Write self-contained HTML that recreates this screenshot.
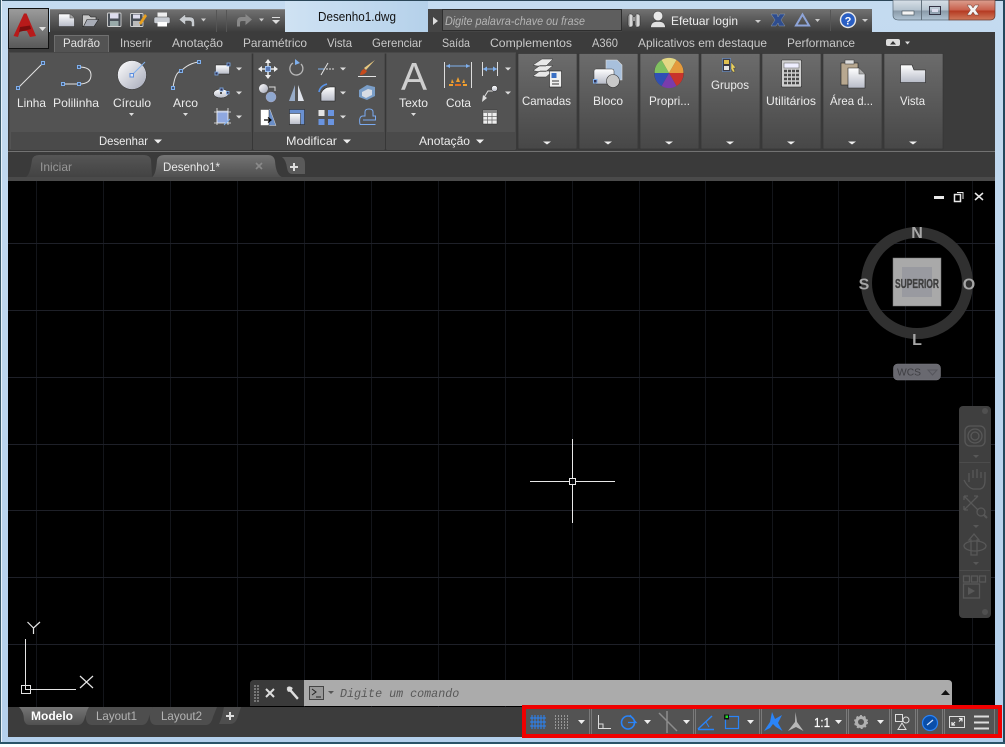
<!DOCTYPE html>
<html><head><meta charset="utf-8"><title>Desenho1.dwg</title>
<style>
html,body{margin:0;padding:0;background:#fff;width:1005px;height:747px;overflow:hidden}
svg{display:block;position:absolute;left:0;top:0}
text{font-family:"Liberation Sans",sans-serif;font-size:12px}
.t{fill:#c9c9c9}.l{fill:#ececec}
</style></head><body>
<svg width="1005" height="747" viewBox="0 0 1005 747" xmlns="http://www.w3.org/2000/svg">
<defs>
<linearGradient id="fr" x1="0" y1="0" x2="0" y2="1"><stop offset="0" stop-color="#c4dbf0"/><stop offset="1" stop-color="#b4d0ec"/></linearGradient>
<linearGradient id="tt" x1="0" y1="0" x2="1" y2="0"><stop offset="0" stop-color="#cfe2f3"/><stop offset="1" stop-color="#b5d1ea"/></linearGradient>
<linearGradient id="qa" x1="0" y1="0" x2="0" y2="1"><stop offset="0" stop-color="#727272"/><stop offset="1" stop-color="#3c3c3c"/></linearGradient>
<linearGradient id="lg" x1="0" y1="0" x2="0" y2="1"><stop offset="0" stop-color="#9c9c9c"/><stop offset="1" stop-color="#585858"/></linearGradient>
<linearGradient id="cp" x1="0" y1="0" x2="0" y2="1"><stop offset="0" stop-color="#6c6c6c"/><stop offset="1" stop-color="#474747"/></linearGradient>
<linearGradient id="dt" x1="0" y1="0" x2="0" y2="1"><stop offset="0" stop-color="#747474"/><stop offset="1" stop-color="#505050"/></linearGradient>
<linearGradient id="it" x1="0" y1="0" x2="0" y2="1"><stop offset="0" stop-color="#555"/><stop offset="1" stop-color="#434343"/></linearGradient>
<linearGradient id="wb" x1="0" y1="0" x2="0" y2="1"><stop offset="0" stop-color="#d8e0e8"/><stop offset=".5" stop-color="#b4c2ce"/><stop offset=".55" stop-color="#8a9aa8"/><stop offset="1" stop-color="#b0c4d4"/></linearGradient>
<linearGradient id="wc" x1="0" y1="0" x2="0" y2="1"><stop offset="0" stop-color="#dca090"/><stop offset=".5" stop-color="#c8604c"/><stop offset=".55" stop-color="#b53a22"/><stop offset="1" stop-color="#cf7a5c"/></linearGradient>
<linearGradient id="ci" x1="0" y1="0" x2="1" y2="1"><stop offset="0" stop-color="#fff"/><stop offset="1" stop-color="#a4a8b8"/></linearGradient>
<linearGradient id="ic" x1="0" y1="0" x2="0" y2="1"><stop offset="0" stop-color="#fff"/><stop offset="1" stop-color="#b8bcc8"/></linearGradient>
</defs>

<!-- frame -->
<rect width="1005" height="744" fill="url(#fr)"/>
<rect x="285" y="1" width="143" height="31" fill="url(#tt)"/>
<rect y="0" width="1005" height="1" fill="#2b4658"/>
<rect x="1" y="0" width="1" height="744" fill="#e8f1f9"/>
<rect x="0" y="0" width="1" height="744" fill="#3a5a6a"/>
<rect x="1003" y="0" width="2" height="744" fill="#24475c"/>
<rect y="742" width="1005" height="2" fill="#2a5468"/>

<!-- tab bar + ribbon base -->
<rect x="8" y="32" width="987" height="120" fill="#3c3c3c"/>
<rect x="8" y="151" width="987" height="1" fill="#727272"/>
<rect x="8" y="152" width="987" height="29" fill="#3a3a3a"/>
<rect x="8" y="177" width="987" height="4" fill="#4a4a4a"/>

<!-- canvas -->
<rect x="8" y="181" width="987" height="526" fill="#000"/>
<g stroke="#13151a" stroke-width="1">
<path d="M36.5 181V707M103.5 181V707M170.5 181V707M237.5 181V707M304.5 181V707M371.5 181V707M438.5 181V707M505.5 181V707M572.5 181V707M639.5 181V707M705.5 181V707M772.5 181V707M838.5 181V707M905.5 181V707M972.5 181V707"/>
</g>
<g stroke="#1e2028" stroke-width="1">
<path d="M8 243.5H995M8 310.5H995M8 377.5H995M8 444.5H995M8 510.5H995M8 577.5H995M8 644.5H995"/>
</g>

<!-- crosshair -->
<path d="M530 481.5H569M576 481.5H615M572.5 439V478M572.5 485V523" stroke="#e8e8e8" fill="none"/>
<rect x="569.5" y="478.5" width="6" height="6" fill="none" stroke="#e8e8e8"/>

<!-- UCS -->
<g stroke="#e4e4e4" fill="none" stroke-width="1">
<path d="M25.5 639V689.5H76"/>
<rect x="21.5" y="685.5" width="9" height="8"/>
<path d="M80 676L93 688M93 676L80 688M27.5 622L33.5 628L40 622M33.5 628V634" stroke-width="1.2"/>
</g>

<!-- QAT -->
<path d="M50 9H285V32H50Z" fill="url(#qa)"/>
<rect x="50" y="9" width="235" height="1" fill="#8a8a8a"/>
<!-- logo -->
<rect x="8.5" y="8.5" width="40" height="40" fill="url(#lg)" stroke="#111"/>
<path d="M13.500 36L24 13.500H26.500L36 36L30 37L27 31L20 31L18 37Z" fill="#b81a1a"/>
<path d="M20 27L30 25.500L31 29L19 32Z" fill="#7a0e0e"/>
<path d="M39 27H46L42.500 31Z" fill="#e0e0e0"/>
<!-- new -->
<path d="M58.500 14H70L74.500 18V26.500H58.500Z" fill="url(#ic)" stroke="#333" stroke-width=".6"/>
<path d="M70 14V18H74.500" fill="#aaa" stroke="#555" stroke-width=".6"/>
<!-- open -->
<path d="M82.500 15H89L91 17H96V20H87L84 26.500H82.500Z" fill="#c8c8c8" stroke="#222" stroke-width=".6"/>
<path d="M87 19.500H98.500L94 26.500H83.500Z" fill="#a8acb6" stroke="#222" stroke-width=".6"/>
<!-- save -->
<rect x="107.500" y="13" width="13.500" height="13.500" fill="#4a5058" stroke="#d0d0d0" stroke-width=".9" rx="1"/>
<rect x="110" y="13.500" width="8.500" height="5" fill="#dde"/>
<rect x="110" y="21" width="8.500" height="5" fill="#9aa"/>
<!-- saveas -->
<rect x="130.500" y="13.500" width="12.500" height="13" fill="#4a5058" stroke="#d0d0d0" stroke-width=".9" rx="1"/>
<rect x="133" y="14.500" width="7" height="4" fill="#dde"/>
<rect x="133" y="21" width="7" height="5" fill="#bbb"/>
<path d="M139 23L145 14L147 16L141 25Z" fill="#e8a020"/>
<!-- print -->
<rect x="157.500" y="12.500" width="9.500" height="5.500" fill="#eee"/>
<rect x="154" y="17" width="16" height="6.500" rx="1.500" fill="#c8ccd2" stroke="#444" stroke-width=".5"/>
<rect x="157.500" y="22" width="9.500" height="4.500" fill="#fff"/>
<!-- undo -->
<path d="M179 19.500L185.500 14V17H190Q194.500 17 194.500 22V26.500H191.500V22.500Q191.500 21 189 21H185.500V25Z" fill="#c8ccd0" stroke="#333" stroke-width=".4"/>
<path d="M201 18.500H206L203.500 21.500Z" fill="#ccc"/>
<path d="M216.500 10V32M226.500 10V32" stroke="#555"/>
<path d="M252 19.500L245.500 14V17H241Q237 17 237 22V26.500H240V22.500Q240 21 242 21H245.500V25Z" fill="#888"/>
<path d="M259 18.500H264L261.500 21.500Z" fill="#ccc"/>
<path d="M272 17H280V18H272ZM272 20H280L276 24Z" fill="#ddd"/>

<text x="318" y="21" style="font-size:12.500px" fill="#111" textLength="78" lengthAdjust="spacingAndGlyphs">Desenho1.dwg</text>

<!-- search -->
<rect x="428" y="9" width="195" height="23" fill="#454545"/>
<path d="M433 17L438 21L433 25Z" fill="#ddd"/>
<rect x="442.500" y="9.500" width="179" height="21" fill="#5e5e5e" stroke="#2e2e2e"/>
<text x="445" y="25" fill="#b4b4b4" font-style="italic" textLength="140" lengthAdjust="spacingAndGlyphs">Digite palavra-chave ou frase</text>

<!-- right bar -->
<path d="M622 9H872V32H622Z" fill="url(#qa)"/>
<rect x="628" y="14" width="5" height="13" rx="2" fill="#d8d8d8" stroke="#222" stroke-width=".5"/>
<rect x="635" y="14" width="5" height="13" rx="2" fill="#d8d8d8" stroke="#222" stroke-width=".5"/>
<rect x="632" y="17" width="4" height="4" fill="#999"/>
<path d="M629 15V26M636 15V26" stroke="#555" stroke-width=".7"/>
<circle cx="658" cy="16" r="4.800" fill="#e8e8e8" stroke="#333" stroke-width=".5"/>
<path d="M650.500 27.500Q651 22 656 21.500H660Q665 22 665.500 27.500Z" fill="#e0e0e0" stroke="#333" stroke-width=".5"/>
<text x="671" y="25" fill="#ededed" textLength="67" lengthAdjust="spacingAndGlyphs">Efetuar login</text>
<path d="M755 20H761L758 23Z" fill="#ccc"/>
<path d="M771 14H777L778 17L780 14H785L781 20L785 26H779L778 23L776 26H771L775 20Z" fill="#2f4d8e" stroke="#9ab" stroke-width=".4"/>
<path d="M802.500 14.500L809 25.500H796Z" fill="none" stroke="#8ea4d8" stroke-width="2"/>
<path d="M815 19H820L817.500 22Z" fill="#ccc"/>
<path d="M830.500 10V31" stroke="#555"/>
<circle cx="848" cy="20" r="7.500" fill="#2a5fc4" stroke="#e8e8e8" stroke-width="1.400"/>
<text x="848" y="24.500" text-anchor="middle" fill="#fff" style="font-size:11px;font-weight:bold">?</text>
<path d="M862 19H868L865 22Z" fill="#ccc"/>

<!-- window buttons -->
<path d="M893 0H949V20H899Q893 20 893 15Z" fill="url(#wb)" stroke="#5a6a78" stroke-width=".7"/>
<path d="M921.500 0V20" stroke="#64727e"/>
<path d="M949 0H995V15Q995 20 990 20H949Z" fill="url(#wc)" stroke="#6a3a30" stroke-width=".7"/>
<rect x="902" y="11" width="12" height="4" fill="#f4f4f4" stroke="#3c4a54" stroke-width=".6"/>
<rect x="929.500" y="6.500" width="11" height="8" fill="none" stroke="#334" stroke-width="1"/>
<rect x="932" y="9" width="6" height="3" fill="#dde"/>
<path d="M967 5H971L973 8L975 5H979L975.500 10L979 15H975L973 12L971 15H967L970.500 10Z" fill="#f4f4f4" stroke="#6a3a30" stroke-width=".5"/>

<!-- active tab -->
<path d="M54.500 52V35.500H108.500V52" fill="#535353" stroke="#7e7e7e" stroke-width=".7"/>
<text x="63" y="47" textLength="37" lengthAdjust="spacingAndGlyphs" fill="#e4e4e4">Padrão</text>
<text x="120" y="47" class="t" textLength="32" lengthAdjust="spacingAndGlyphs">Inserir</text>
<text x="172" y="47" class="t" textLength="51" lengthAdjust="spacingAndGlyphs">Anotação</text>
<text x="243" y="47" class="t" textLength="64" lengthAdjust="spacingAndGlyphs">Paramétrico</text>
<text x="327" y="47" class="t" textLength="25" lengthAdjust="spacingAndGlyphs">Vista</text>
<text x="372" y="47" class="t" textLength="50" lengthAdjust="spacingAndGlyphs">Gerenciar</text>
<text x="442" y="47" class="t" textLength="28" lengthAdjust="spacingAndGlyphs">Saída</text>
<text x="490" y="47" class="t" textLength="82" lengthAdjust="spacingAndGlyphs">Complementos</text>
<text x="592" y="47" class="t" textLength="26" lengthAdjust="spacingAndGlyphs">A360</text>
<text x="638" y="47" class="t" textLength="129" lengthAdjust="spacingAndGlyphs">Aplicativos em destaque</text>
<text x="787" y="47" class="t" textLength="68" lengthAdjust="spacingAndGlyphs">Performance</text>
<rect x="886" y="39" width="14" height="7" rx="2" fill="#ddd"/>
<path d="M890 44.500H896L893 41Z" fill="#333"/>
<path d="M905 41.500H910L907.500 44.500Z" fill="#ddd"/>

<!-- panels -->
<rect x="9" y="53" width="243" height="97" fill="#535353" stroke="#353535" stroke-width=".6"/>
<rect x="253" y="53" width="132" height="97" fill="#535353" stroke="#353535" stroke-width=".6"/>
<rect x="386" y="53" width="130" height="97" fill="#535353" stroke="#353535" stroke-width=".6"/>
<path d="M9 53H516" stroke="#535353"/>
<rect x="11" y="132" width="240" height="17" fill="#4a4a4a"/>
<rect x="254" y="132" width="130" height="17" fill="#4a4a4a"/>
<rect x="387" y="132" width="128" height="17" fill="#4a4a4a"/>
<text x="99" y="145" class="l" textLength="49" lengthAdjust="spacingAndGlyphs">Desenhar</text>
<path d="M154 139.500H162L158 143.500Z" fill="#eee"/>
<text x="286" y="145" class="l" textLength="51" lengthAdjust="spacingAndGlyphs">Modificar</text>
<path d="M343 139.500H351L347 143.500Z" fill="#eee"/>
<text x="419" y="145" class="l" textLength="51" lengthAdjust="spacingAndGlyphs">Anotação</text>
<path d="M476 139.500H484L480 143.500Z" fill="#eee"/>

<!-- Desenhar icons -->
<g fill="none" stroke="#e4e4e4" stroke-width="1">
<path d="M18 88L43 63"/>
<path d="M63 84H79Q91 84 91 75Q91 67 79 67"/>
<path d="M173 88Q175 72 181 71Q189 63 199 62"/>
</g>
<g fill="#41587c" stroke="#7fb0ee" stroke-width="1">
<rect x="16.500" y="86.500" width="3" height="3"/><rect x="41.500" y="61.500" width="3" height="3"/>
<rect x="61.500" y="82.500" width="3" height="3"/><rect x="77.500" y="82.500" width="3" height="3"/><rect x="77.500" y="65.500" width="3" height="3"/>
<rect x="171.500" y="86.500" width="3" height="3"/><rect x="179.500" y="69.500" width="3" height="3"/><rect x="197.500" y="60.500" width="3" height="3"/>
</g>
<circle cx="132" cy="75" r="14.500" fill="url(#ci)" stroke="#333" stroke-width=".5"/>
<path d="M132 75L145 62" stroke="#7fb0ee"/>
<rect x="130" y="73.500" width="3.500" height="3.500" fill="#e4e8f0" stroke="#5b8ee0"/>
<text x="17" y="107" class="l" textLength="29" lengthAdjust="spacingAndGlyphs">Linha</text>
<text x="53" y="107" class="l" textLength="46" lengthAdjust="spacingAndGlyphs">Polilinha</text>
<text x="113" y="107" class="l" textLength="38" lengthAdjust="spacingAndGlyphs">Círculo</text>
<text x="173" y="107" class="l" textLength="25" lengthAdjust="spacingAndGlyphs">Arco</text>
<path d="M129 113H134L131.500 116ZM183 113H188L185.500 116ZM411 113H416L413.500 116Z" fill="#ddd"/>
<!-- small -->
<rect x="215.500" y="65" width="14" height="9" fill="url(#ic)" stroke="#222" stroke-width=".5"/>
<rect x="215" y="72" width="3" height="3" fill="#335" stroke="#7fb0ee" stroke-width=".8"/>
<rect x="227" y="63" width="3" height="3" fill="#335" stroke="#7fb0ee" stroke-width=".8"/>
<ellipse cx="221" cy="93.500" rx="7.500" ry="4.500" fill="url(#ic)" stroke="#222" stroke-width=".5"/>
<circle cx="221" cy="93" r="1" fill="#222"/>
<rect x="220" y="88" width="3" height="3" fill="#335" stroke="#7fb0ee" stroke-width=".8"/>
<rect x="226.500" y="91.500" width="2.500" height="2.500" fill="#335" stroke="#7fb0ee" stroke-width=".8"/>
<rect x="217" y="111" width="11" height="12" fill="#8fa8e0" stroke="#ddd" stroke-width=".5"/>
<path d="M214 112H231M214 123H231M217 108V125M228 108V125" stroke="#eee" stroke-width=".8"/>
<path d="M224 125L230 119" stroke="#7fb0ee"/>
<path d="M236 67.500H242L239 70.500ZM236 91.500H242L239 94.500ZM236 115.500H242L239 118.500Z" fill="#ddd"/>

<!-- Modificar icons -->
<path d="M268 61V77M260 69H276" stroke="#e4e4e4" stroke-width="1.500"/>
<path d="M268 59L271 63H265ZM268 79L271 75H265ZM258 69L262 66V72ZM278 69L274 66V72Z" fill="#eee"/>
<rect x="265.500" y="66.500" width="5" height="5" fill="#5a7ab8" stroke="#9cc0f0"/>
<path d="M293 63A6.500 6.500 0 1 0 301 64" fill="none" stroke="#b8b8b8" stroke-width="1.300"/>
<path d="M295 59L300 63L295 65Z" fill="#7fb0ee"/>
<path d="M318 69H324" stroke="#7fb0ee"/><path d="M326 69H335" stroke="#ddd" stroke-dasharray="2 1"/>
<path d="M321 75L328 63" stroke="#e4e4e4"/>
<path d="M340 67.500H346L343 70.500Z" fill="#ddd"/>
<path d="M358 76.500H376" stroke="#e4e4e4"/>
<path d="M375 60L366 70L364 68Z" fill="#e8c880"/>
<path d="M360 75Q361 70 364 69L367 71Q365 75 360 75Z" fill="#c84a1c"/>
<circle cx="263.500" cy="88.500" r="4.500" fill="url(#ci)"/>
<circle cx="271" cy="97" r="5" fill="#8fa8d0" stroke="#aac" stroke-width=".5"/>
<path d="M269 87H275V91" fill="none" stroke="#ddd"/>
<path d="M295 85V101L289 101Z" fill="#98acc8"/><path d="M298 85V101L304 101Z" fill="#e0e4ec"/>
<path d="M319 92Q320 86 327 84" fill="none" stroke="#5a94e8" stroke-width="1.600"/>
<path d="M321 101V93Q324 87 330 87H335V101Z" fill="url(#ic)" stroke="#222" stroke-width=".6"/>
<path d="M340 91.500H346L343 94.500Z" fill="#ddd"/>
<path d="M359 90L367 85L375 87V96L367 100L359 97Z" fill="#7a9ec8"/>
<path d="M362 92L368 89L372 90V95L366 98L362 96Z" fill="#d8dce4"/>
<path d="M260.500 109.500H270L276 125.500H260.500Z" fill="#6a8ec8" stroke="#ddd" stroke-width=".5"/>
<path d="M260.500 109.500H269V125.500H260.500Z" fill="#fff" stroke="#222" stroke-width=".5"/>
<path d="M264 120H271M268 117.500L271 120L268 122.500" stroke="#000" fill="none" stroke-width="1.200"/>
<rect x="289.500" y="109.500" width="15" height="15" fill="#6a90d0" stroke="#222" stroke-width=".5"/>
<rect x="289.500" y="113.500" width="11" height="11" fill="url(#ic)" stroke="#222" stroke-width=".5"/>
<rect x="318.500" y="110" width="6" height="6" fill="#e4e4e4"/>
<rect x="328" y="110" width="6" height="6" fill="#6a94e0"/>
<rect x="318.500" y="119" width="6" height="6" fill="#6a94e0"/>
<rect x="328" y="119" width="6" height="6" fill="#6a94e0"/>
<path d="M340 115.500H346L343 118.500Z" fill="#ddd"/>
<path d="M360 124.500H375.500M360 124.500Q358.500 116 363 116H365V112Q365 109 369 109Q373 109 373 112V116H375.500V120H363" fill="none" stroke="#7aaaf0" stroke-width="1"/>

<!-- Anotação icons -->
<text x="414" y="90" text-anchor="middle" fill="#cfcfcf" style="font-size:39px">A</text>
<text x="399" y="107" class="l" textLength="29" lengthAdjust="spacingAndGlyphs">Texto</text>
<path d="M444.500 62V88M471.500 62V88" stroke="#ddd"/>
<path d="M446 66H470" stroke="#7fb0ee"/>
<path d="M446 66L450 64V68ZM470 66L466 64V68Z" fill="#7fb0ee"/>
<path d="M458 77L456 82H460ZM452 79L451 83L454 83ZM464 79L465 83L462 83ZM449 84H453V86H449ZM463 84H467V86H463Z" fill="#f0a030"/>
<path d="M455 84H461V86H455Z" fill="#e07020"/>
<text x="446" y="107" class="l" textLength="25" lengthAdjust="spacingAndGlyphs">Cota</text>
<path d="M482.500 62V76M497.500 62V76" stroke="#ddd"/>
<path d="M483 69H497" stroke="#7fb0ee"/><path d="M483 69L487 66.500V71.500ZM497 69L493 66.500V71.500Z" fill="#7fb0ee"/>
<path d="M505 67.500H511L508 70.500ZM505 91.500H511L508 94.500Z" fill="#ddd"/>
<path d="M483 99L488 91H495" fill="none" stroke="#ddd"/>
<circle cx="494.500" cy="88.500" r="3" fill="url(#ic)" stroke="#222" stroke-width=".5"/>
<path d="M482 102L483 95L487 98Z" fill="#ddd"/>
<rect x="483" y="110" width="14" height="14" fill="#eee" stroke="#333" stroke-width=".5"/>
<rect x="483" y="110" width="14" height="3" fill="#888"/>
<path d="M487.500 113V124M492 113V124M483 116.500H497M483 120H497" stroke="#666" stroke-width=".7"/>

<!-- collapsed panels -->
<g fill="url(#cp)" stroke="#333" stroke-width=".6">
<rect x="518" y="53.500" width="59" height="95.500"/>
<rect x="579" y="53.500" width="59" height="95.500"/>
<rect x="640" y="53.500" width="59" height="95.500"/>
<rect x="701" y="53.500" width="59" height="95.500"/>
<rect x="762" y="53.500" width="59" height="95.500"/>
<rect x="823" y="53.500" width="59" height="95.500"/>
<rect x="884" y="53.500" width="59" height="95.500"/>
</g>
<text x="522" y="105" class="l" textLength="49" lengthAdjust="spacingAndGlyphs">Camadas</text>
<text x="593" y="105" class="l" textLength="30" lengthAdjust="spacingAndGlyphs">Bloco</text>
<text x="649" y="105" class="l" textLength="41" lengthAdjust="spacingAndGlyphs">Propri...</text>
<text x="711" y="89" class="l" textLength="38" lengthAdjust="spacingAndGlyphs">Grupos</text>
<text x="766" y="105" class="l" textLength="50" lengthAdjust="spacingAndGlyphs">Utilitários</text>
<text x="830" y="105" class="l" textLength="43" lengthAdjust="spacingAndGlyphs">Área d...</text>
<text x="900" y="105" class="l" textLength="25" lengthAdjust="spacingAndGlyphs">Vista</text>
<path d="M543 141.500H551L547 144.500ZM604 141.500H612L608 144.500ZM665 141.500H673L669 144.500ZM726 141.500H734L730 144.500ZM787 141.500H795L791 144.500ZM848 141.500H856L852 144.500ZM909 141.500H917L913 144.500Z" fill="#eee"/>
<!-- Camadas icon -->
<path d="M533 76L540 71H553L546 77H537ZM533 70.500L540 65.500H553L546 71.500H537ZM533 65L542 59H553L546 66H537Z" fill="#e8e8e8" stroke="#333" stroke-width=".5"/>
<rect x="549.500" y="71" width="12" height="16" fill="#f0f0f0" stroke="#222" stroke-width=".6"/>
<rect x="551.500" y="73" width="5" height="5" fill="#3a70c4"/>
<path d="M552 81H559M552 84H559" stroke="#333"/>
<!-- Bloco icon -->
<path d="M606 60H617L622 65V80H606Z" fill="#a8c0dc" stroke="#ddd" stroke-width=".6"/>
<rect x="594" y="69" width="20" height="15" rx="2" fill="url(#ic)" stroke="#333" stroke-width=".5"/>
<circle cx="613" cy="81" r="6.500" fill="#c8c8c8" stroke="#333" stroke-width=".6"/>
<rect x="593.500" y="79.500" width="3.500" height="3.500" fill="#335" stroke="#7fb0ee"/>
<!-- color wheel -->
<circle cx="669" cy="73" r="15" fill="#444"/>
<path d="M669 73L661.500 60A14.500 14.500 0 0 1 676.500 60Z" fill="#e4d884"/>
<path d="M669 73L676.500 60A14.500 14.500 0 0 1 683.500 73Z" fill="#e49a3c"/>
<path d="M669 73H683.500A14.500 14.500 0 0 1 676.500 86Z" fill="#c8342c"/>
<path d="M669 73L676.500 86A14.500 14.500 0 0 1 661.500 86Z" fill="#7a3cac"/>
<path d="M669 73L661.500 86A14.500 14.500 0 0 1 654.500 73Z" fill="#3050b4"/>
<path d="M669 73H654.500A14.500 14.500 0 0 1 661.500 60Z" fill="#80c060"/>
<!-- Grupos -->
<rect x="722.500" y="58.500" width="8" height="13" fill="#3a3a44" stroke="#6a9ee8" stroke-dasharray="1 1"/>
<rect x="724" y="60" width="5" height="4" fill="#e0c050"/>
<rect x="724" y="66" width="5" height="4" fill="#e4e4e4"/>
<path d="M731 62L736 68L733.500 68L735 72L733 72L731 69Z" fill="#e8d060" stroke="#333" stroke-width=".4"/>
<!-- Calculator -->
<rect x="781.500" y="60" width="20" height="27" rx="1" fill="#d0d0d0" stroke="#222" stroke-width=".6"/>
<rect x="784" y="63" width="15" height="5" fill="#eef" stroke="#555" stroke-width=".5"/>
<path d="M784 71h15M784 75h15M784 79h15M784 83h15" stroke="#4a4a4a" stroke-width="2.500" stroke-dasharray="3 1"/>
<!-- Clipboard -->
<rect x="841" y="63" width="17" height="22" fill="#b8a890" stroke="#222" stroke-width=".6"/>
<rect x="845" y="60" width="9" height="4" fill="#ddd" stroke="#333" stroke-width=".5"/>
<path d="M848 68H859L865 74V88H848Z" fill="url(#ic)" stroke="#222" stroke-width=".6"/>
<path d="M859 68V74H865" fill="#aaa" stroke="#555" stroke-width=".6"/>
<!-- Vista folder -->
<path d="M900.500 65H912L914 70H925.500V82.500H900.500Z" fill="url(#ic)" stroke="#222" stroke-width=".6"/>

<!-- doc tabs -->
<path d="M26 177Q30 175 32 160Q33 155 39 155H144Q150 155 151 160L152 177Z" fill="url(#it)"/>
<path d="M152 177Q156 175 157 160Q158 155 164 155H268Q274 155 275 161Q276 175 282 177Z" fill="url(#dt)"/>
<path d="M282 157H300Q305 157 305 164V174H292Q288 174 287 168Q286 160 282 157Z" fill="#5a5a5a"/>
<text x="40" y="171" fill="#989898" textLength="32" lengthAdjust="spacingAndGlyphs">Iniciar</text>
<text x="163" y="171" fill="#e8e8e8" textLength="57" lengthAdjust="spacingAndGlyphs">Desenho1*</text>
<path d="M256 163L262 169M262 163L256 169" stroke="#8a8a8a" stroke-width="1.600"/>
<path d="M294 163V171M290 167H298" stroke="#ddd" stroke-width="2"/>

<!-- viewport controls -->
<rect x="934" y="196" width="10" height="3" fill="#e8e8e8"/>
<rect x="954.500" y="194.500" width="6" height="7" fill="none" stroke="#e8e8e8" stroke-width="1.500"/>
<path d="M957 192.500H963V199" fill="none" stroke="#e8e8e8"/>
<path d="M975 193L983 200M983 193L975 200" stroke="#e8e8e8" stroke-width="1.500"/>

<!-- view cube -->
<circle cx="917" cy="283" r="50.500" fill="none" stroke="#303030" stroke-width="11"/>
<rect x="893" y="258" width="48" height="48" fill="#a9a9a9" stroke="#777" stroke-width=".5"/>
<rect x="902" y="267" width="30" height="30" fill="#999aa0"/>
<text x="917" y="288" text-anchor="middle" fill="#3e3e3e" stroke="#3e3e3e" stroke-width=".3" textLength="44" lengthAdjust="spacingAndGlyphs" style="font-size:13px;font-weight:bold">SUPERIOR</text>
<g fill="#a6a6a6" text-anchor="middle">
<text x="917" y="238" style="font-size:16px;font-weight:bold">N</text>
<text x="864" y="289.500" style="font-size:16px;font-weight:bold">S</text>
<text x="969" y="289.500" style="font-size:16px;font-weight:bold">O</text>
<text x="917" y="345" style="font-size:16px;font-weight:bold">L</text>
</g>
<rect x="893.500" y="364" width="47" height="16" rx="4" fill="#696970" stroke="#7a7a80" stroke-width=".5"/>
<text x="897" y="375.500" fill="#3e3e42" style="font-size:10.500px" textLength="24" lengthAdjust="spacingAndGlyphs">WCS</text>
<path d="M928 370H937L932.500 375Z" fill="none" stroke="#55555c"/>

<!-- navbar -->
<rect x="959" y="406" width="32" height="212" rx="4" fill="#3f3f3f"/>
<path d="M959.500 462.500H990M959.500 570.500H990" stroke="#4c4c4c"/>
<circle cx="985" cy="411" r="3" fill="#505050"/>
<circle cx="985" cy="612" r="3" fill="#505050"/>
<g fill="none" stroke="#585858" stroke-width="1.300">
<rect x="965" y="426" width="20" height="20" rx="5"/>
<circle cx="975" cy="436" r="7"/><circle cx="975" cy="436" r="4"/>
<path d="M964 480Q968 488 973 489H980Q985 488 985 480V472M981 472V478M977 469V478M973 470V478M969 473V482"/>
<path d="M964 496L978 510M978 496L964 510M964 496V500M964 496H968M978 496H974M964 510V506M964 510H968"/>
<circle cx="981" cy="512" r="4"/>
<path d="M984 515L987 518" stroke-width="2"/>
<path d="M974 534L979 540H977V555H971V540H969Z"/>
<ellipse cx="975" cy="546" rx="11" ry="5"/>
<rect x="963.500" y="576" width="6" height="6"/><rect x="971.500" y="576" width="6" height="6"/><rect x="979.500" y="576" width="6" height="6"/>
<rect x="963.500" y="584" width="16" height="14"/>
</g>
<path d="M968 587L975 591L968 595Z" fill="#585858"/>
<path d="M973 455H979L976 458ZM973 525H979L976 528ZM973 562H979L976 565Z" fill="#585858"/>

<!-- command line -->
<path d="M250 684Q250 680 254 680H304V706H250Z" fill="#3a3a3a"/>
<path d="M304 680H948Q952 680 952 684V706H304Z" fill="#ababab"/>
<path d="M255 685V702M258 685V702" stroke="#777" stroke-width="2" stroke-dasharray="2 1"/>
<path d="M266 689L274 697M274 689L266 697" stroke="#ddd" stroke-width="2"/>
<path d="M287 687Q290 685 293 688L292 690L299 698L297 700L290 692L288 692Q286 690 287 687Z" fill="#ddd" stroke="#333" stroke-width=".4"/>
<rect x="309.500" y="686.500" width="14" height="13" fill="#999" stroke="#444"/>
<path d="M312 689L316 692L312 695M316 697H321" fill="none" stroke="#222"/>
<path d="M328 691H334L331 694Z" fill="#555"/>
<text x="340" y="697" fill="#585858" font-style="italic" style="font-family:'Liberation Mono',monospace;font-size:11.700px">Digite um comando</text>
<path d="M941 695L945.500 690L950 695Z" fill="#111"/>

<!-- layout tabs -->
<rect x="8" y="707" width="987" height="30" fill="#3c3c3c"/>
<path d="M19 707Q24 712 24 720Q25 725 30 725H78Q83 725 85 717L89 707Z" fill="url(#dt)"/>
<path d="M89 707Q85 713 86 719Q87 725 92 725H142Q147 725 149 717L153 707Z" fill="#4e4e4e"/>
<path d="M153 707Q149 713 150 719Q151 725 156 725H206Q211 725 213 717L217 707Z" fill="#4e4e4e"/>
<path d="M224 707H241L238 716Q236 724 230 724H219Q222 718 224 707Z" fill="#4e4e4e"/>
<text x="31" y="720" fill="#fff" style="font-size:12px;font-weight:bold" textLength="42" lengthAdjust="spacingAndGlyphs">Modelo</text>
<text x="96" y="720" fill="#b4b4b4" textLength="41" lengthAdjust="spacingAndGlyphs">Layout1</text>
<text x="161" y="720" fill="#b4b4b4" textLength="41" lengthAdjust="spacingAndGlyphs">Layout2</text>
<path d="M230 712V720M226 716H234" stroke="#ddd" stroke-width="2"/>

<!-- status bar -->
<rect x="522" y="705" width="480" height="33" fill="#f00000"/>
<rect x="526" y="709" width="472" height="25" fill="#535353"/>
<path d="M530 718H546M530 722H546M530 726H546M532 715V729M535 715V729M538 715V729M541 715V729M544 715V729" stroke="#2a84f8" stroke-width="1"/>
<path d="M555 716H569M555 719H569M555 722H569M555 725H569M555 728H569" stroke="#ddd" stroke-dasharray="1 2"/>
<path d="M578 720H585L581.500 724Z" fill="#eee"/>
<g stroke="#7a7a7a"><path d="M589.500 709V734M591.500 709V734M693.500 709V734M695.500 709V734M759.500 709V734M761.500 709V734M846.500 709V734M848.500 709V734M889.500 709V734M891.500 709V734M915.500 709V734M917.500 709V734M942.500 709V734M944.500 709V734M994.500 709V734"/></g>
<path d="M598.500 715V728.500H611" fill="none" stroke="#ddd"/><path d="M598.500 724H603V728" fill="none" stroke="#ddd"/>
<circle cx="628" cy="722.500" r="6.500" fill="none" stroke="#2a84f8" stroke-width="1.600"/>
<path d="M628 722.500H636L630 715" fill="none" stroke="#2a84f8" stroke-width="1.300"/>
<path d="M644 720H651L647.500 724Z" fill="#eee"/>
<path d="M659 713L677 731M667 711V733" stroke="#8c8c8c" stroke-width="1.500"/>
<path d="M683 720H690L686.500 724Z" fill="#eee"/>
<path d="M698 729L712 716M698 729.500H714" stroke="#2a84f8" stroke-width="1.500" fill="none"/>
<path d="M706 722L709 727" stroke="#2a84f8" fill="none"/>
<rect x="725.500" y="716.500" width="13" height="12" fill="none" stroke="#2a84f8" stroke-width="1.200"/>
<rect x="724" y="714.500" width="5" height="5" fill="#111"/><rect x="725.500" y="715.500" width="2.500" height="2.500" fill="#22e022"/>
<path d="M747 720H754L750.500 724Z" fill="#eee"/>
<path d="M764 731L770 722L772 712L775 719L782 715L778 723L782.500 731L776 727L773 724L770 728Z" fill="#2a84f8"/>
<path d="M788 731L795 722L795.500 712L797 722L803.500 731L796 727Z" fill="#b8b8b8"/>
<text x="814" y="727" fill="#fff" stroke="#fff" stroke-width=".2" style="font-size:13px" textLength="16" lengthAdjust="spacingAndGlyphs">1:1</text>
<path d="M835 720H842L838.500 724Z" fill="#eee"/>
<circle cx="861" cy="722" r="4.500" fill="none" stroke="#b0b0b0" stroke-width="3"/>
<circle cx="861" cy="722" r="6.200" fill="none" stroke="#b0b0b0" stroke-width="1.600" stroke-dasharray="2 2"/>
<path d="M877 720H884L880.500 724Z" fill="#eee"/>
<rect x="895.500" y="714.500" width="7" height="7" fill="none" stroke="#ddd"/>
<circle cx="906" cy="720" r="3" fill="none" stroke="#ddd"/>
<path d="M902 723L906 729.500H898Z" fill="none" stroke="#ddd"/>
<circle cx="930" cy="723" r="7.500" fill="#0a4ea8" stroke="#2a84f8" stroke-width="1.200"/>
<path d="M927 725L933 720" stroke="#cfe2ff" stroke-width="1.200"/>
<rect x="949.500" y="716.500" width="15" height="11" fill="none" stroke="#ddd"/>
<path d="M952 725L955 722M952 722V725H955M962 718.500L959 721.500M962 721.500V718.500H959" fill="none" stroke="#eee" stroke-width="1.200"/>
<path d="M974 716.500H989M974 722.500H989M974 728.500H989" stroke="#ddd" stroke-width="2"/>
</svg>
</body></html>
